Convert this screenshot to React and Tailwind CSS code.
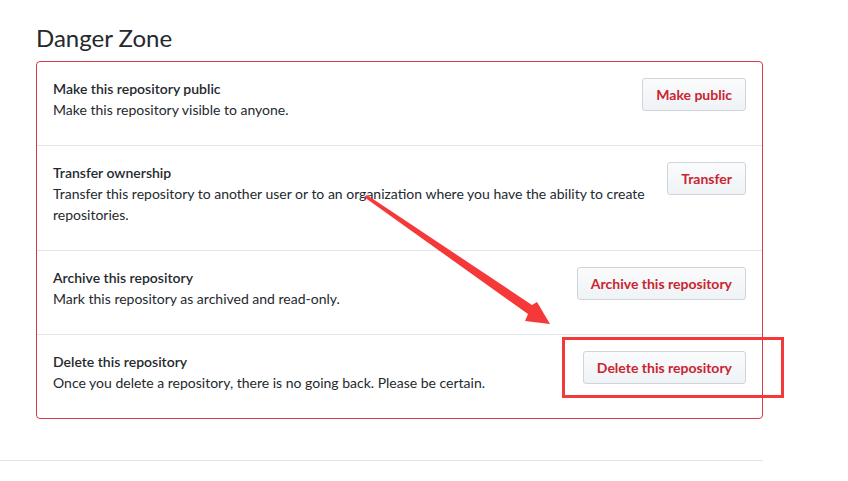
import React from "react";

const rows = [
  {
    title: "Make this repository public",
    desc: "Make this repository visible to anyone.",
    button: "Make public",
  },
  {
    title: "Transfer ownership",
    desc: "Transfer this repository to another user or to an organization where you have the ability to create repositories.",
    button: "Transfer",
  },
  {
    title: "Archive this repository",
    desc: "Mark this repository as archived and read-only.",
    button: "Archive this repository",
  },
  {
    title: "Delete this repository",
    desc: "Once you delete a repository, there is no going back. Please be certain.",
    button: "Delete this repository",
    highlight: true,
  },
];

export default function App() {
  return (
    <div
      className="relative min-h-screen bg-white text-[#24292e]"
      style={{ fontFamily: "Lato, 'Noto Sans', sans-serif" }}
    >
      <div className="w-[763px] border-b border-[#e1e4e8] pb-[41px]">
        <div className="pl-[36px]">
          <h2 className="pt-[23px] pb-[8px] text-[24px] leading-[30px] font-normal">
            Danger Zone
          </h2>
          <div className="border border-[#d73a49] rounded-[4px]">
            {rows.map((row, i) => (
              <div
                key={i}
                className={
                  "flex items-start px-[16px] pt-[16px] pb-[17px] " +
                  (i > 0 ? "border-t border-[#e1e4e8]" : "")
                }
              >
                <div className="flex-1 pr-[16px] text-[14px] leading-[21px] mb-[8px]">
                  <div className="font-semibold">{row.title}</div>
                  <div>{row.desc}</div>
                </div>
                <div className="relative">
                  <button className="h-[33px] px-[13px] text-[14px] font-bold text-[#cb2431] border border-[#d1d5da] rounded-[3px] bg-gradient-to-b from-[#fafbfc] to-[#eff3f6] whitespace-nowrap">
                    {row.button}
                  </button>
                  {row.highlight && (
                    <div className="absolute left-[-21px] top-[-14px] w-[222px] h-[61px] border-[3px] border-[#f53838]" />
                  )}
                </div>
              </div>
            ))}
          </div>
        </div>
      </div>
      <svg
        className="absolute left-0 top-0 pointer-events-none"
        width="848"
        height="481"
      >
        <polygon
          points="364,197 367,195 532,305 537,302 550,324 525,321 528,314"
          fill="#f53838"
        />
      </svg>
    </div>
  );
}
